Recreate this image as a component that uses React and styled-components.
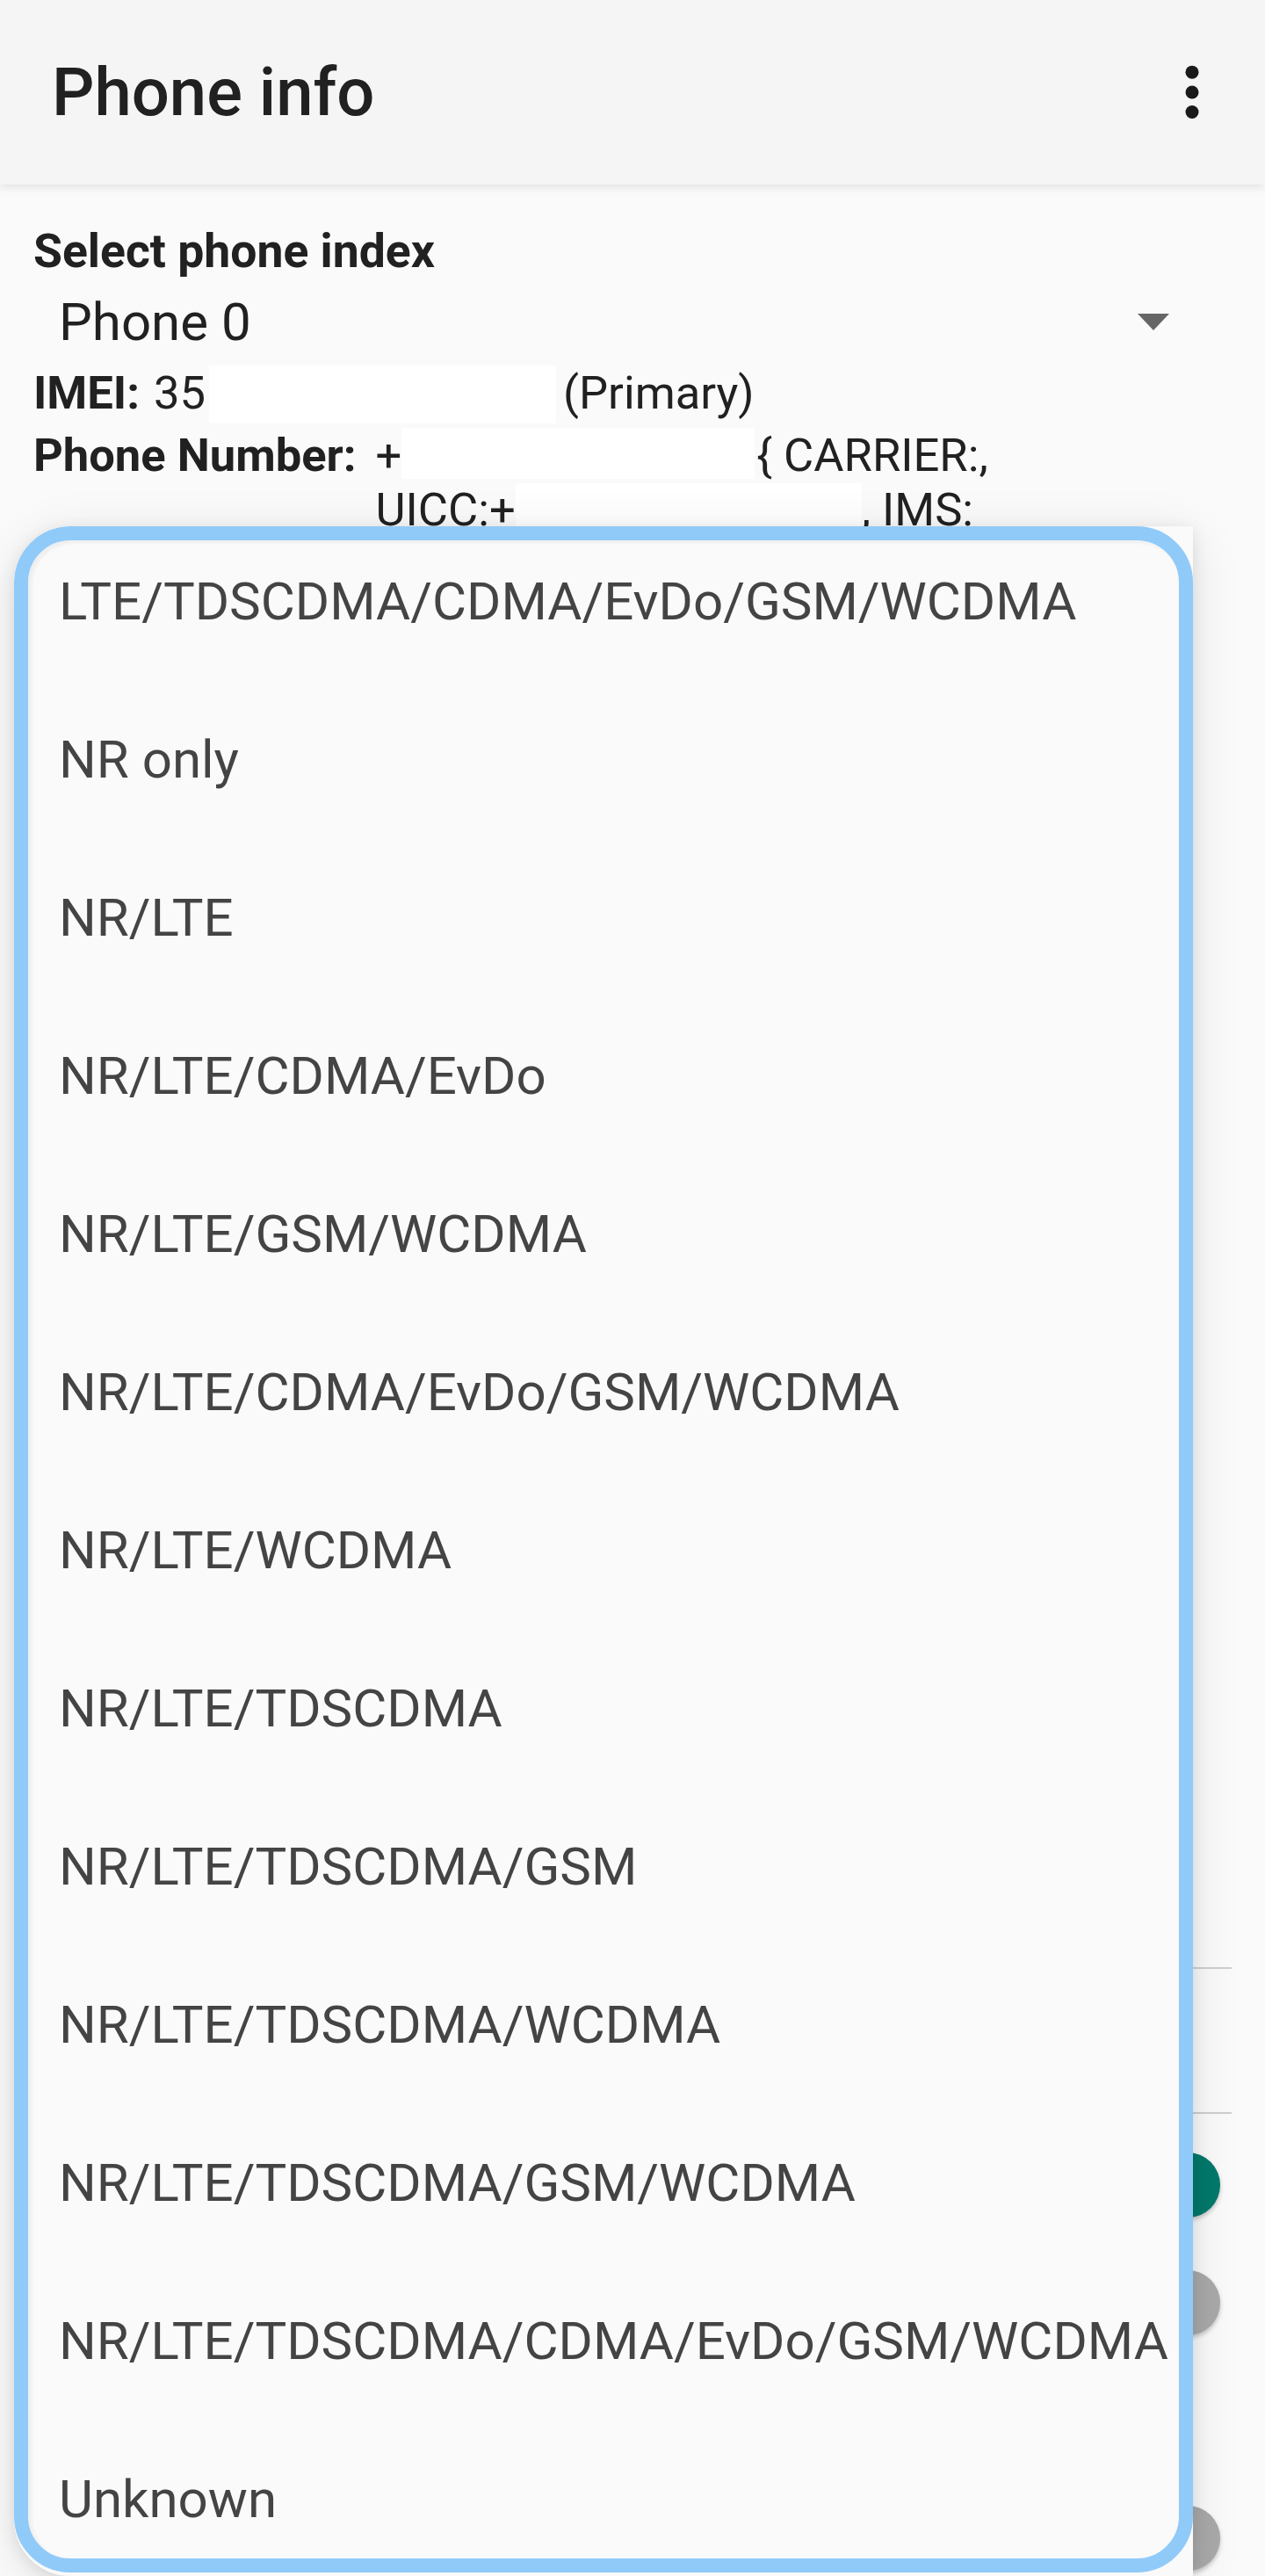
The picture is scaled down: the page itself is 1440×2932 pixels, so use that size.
import React from 'react'
import styled, { createGlobalStyle } from 'styled-components'

const GlobalStyle = createGlobalStyle`
  html, body {
    margin: 0;
    padding: 0;
    background: #fafafa;
  }
  body {
    font-family: Roboto, "Noto Sans", "Liberation Sans", sans-serif;
    color: #212121;
  }
`

const Screen = styled.div`
  position: relative;
  width: 1440px;
  height: 2932px;
  overflow: hidden;
  background: #fafafa;
  display: flex;
  flex-direction: column;
`

const AppBar = styled.header`
  height: 210px;
  flex-shrink: 0;
  display: flex;
  align-items: center;
  justify-content: space-between;
  padding: 0 38px 0 59px;
  background: #f5f5f5;
  box-shadow: 0 3px 10px rgba(0, 0, 0, 0.1);
  position: relative;
  z-index: 1;
`

const Title = styled.h1`
  margin: 0;
  font-size: 76px;
  font-weight: 500;
  color: #212121;
`

const MenuButton = styled.div`
  width: 90px;
  height: 90px;
  display: flex;
  align-items: center;
  justify-content: center;
`

const Content = styled.main`
  display: flex;
  flex-direction: column;
  padding: 45px 38px 0 38px;
`

const Label = styled.div`
  font-size: 53.5px;
  line-height: 61.5px;
  font-weight: 700;
`

const Spinner = styled.div`
  display: flex;
  align-items: center;
  justify-content: space-between;
  padding: 14px 71px 15px 29px;
  font-size: 60px;
`

const Caret = styled.span`
  width: 0;
  height: 0;
  border-left: 18.5px solid transparent;
  border-right: 18.5px solid transparent;
  border-top: 19px solid #666;
`

const InfoRow = styled.div`
  display: flex;
  align-items: baseline;
  font-size: 52.5px;
  line-height: 61.5px;
  margin-bottom: ${p => p.space || 0}px;
`

const InfoLabel = styled.span`
  font-weight: 700;
  margin-right: ${p => p.gap}px;
  white-space: nowrap;
`

const InfoValue = styled.span`
  white-space: nowrap;
`

// white masking box; negative margins keep it from growing the line box
const Redacted = styled.span`
  display: inline-block;
  width: ${p => p.w}px;
  height: ${p => p.h}px;
  background: #fff;
  vertical-align: baseline;
  margin: -10px ${p => p.after || 0}px -${p => p.drop}px ${p => p.before || 0}px;
`

const Spacer = styled.div`
  height: ${p => p.h}px;
  flex-shrink: 0;
`

const Divider = styled.hr`
  margin: 0;
  border: 0;
  height: 2px;
  background: #cfcfcf;
`

const SwitchList = styled.div`
  padding-top: 14px;
  display: flex;
  flex-direction: column;
`

const SwitchRow = styled.div`
  height: 134px;
  display: flex;
  align-items: center;
  justify-content: flex-end;
  padding-right: ${p => p.inset}px;
`

const Thumb = styled.span`
  width: 74px;
  height: 74px;
  border-radius: 50%;
  background: ${p => (p.on ? '#00796b' : p.faint ? '#e6e6e6' : '#a9a9a9')};
  box-shadow: 0 3px 5px rgba(0, 0, 0, ${p => (p.faint ? 0.05 : 0.22)});
`

const Popup = styled.div`
  position: absolute;
  left: 16px;
  top: 599px;
  width: 1342px;
  bottom: 0;
  background: #fafafa;
  border-radius: 64px 0 0 64px;
  overflow: hidden;
  box-shadow: 0 10px 60px rgba(0, 0, 0, 0.09), 0 4px 18px rgba(0, 0, 0, 0.1);
  z-index: 5;

  &::after {
    content: '';
    position: absolute;
    left: 0;
    top: 0;
    right: 0;
    bottom: 4px;
    border: 16px solid #90caf9;
    border-radius: 64px;
    box-shadow: inset 4px 3px 4px rgba(0, 0, 0, 0.05);
    pointer-events: none;
  }
`

const OptionList = styled.ul`
  list-style: none;
  margin: -5px 0 0 0;
  padding: 0;
`

const Option = styled.li`
  height: 180px;
  display: flex;
  align-items: center;
  padding-left: 51px;
  font-size: 60px;
  color: #444;
  white-space: nowrap;
`

const networkTypes = [
  'LTE/TDSCDMA/CDMA/EvDo/GSM/WCDMA',
  'NR only',
  'NR/LTE',
  'NR/LTE/CDMA/EvDo',
  'NR/LTE/GSM/WCDMA',
  'NR/LTE/CDMA/EvDo/GSM/WCDMA',
  'NR/LTE/WCDMA',
  'NR/LTE/TDSCDMA',
  'NR/LTE/TDSCDMA/GSM',
  'NR/LTE/TDSCDMA/WCDMA',
  'NR/LTE/TDSCDMA/GSM/WCDMA',
  'NR/LTE/TDSCDMA/CDMA/EvDo/GSM/WCDMA',
  'Unknown',
]

const MoreIcon = () => (
  <svg width="90" height="90" viewBox="0 0 24 24" fill="#1a1a1a">
    <circle cx="12" cy="5.9" r="2" />
    <circle cx="12" cy="12" r="2" />
    <circle cx="12" cy="18" r="2" />
  </svg>
)

export default function App() {
  return (
    <Screen>
      <GlobalStyle />
      <AppBar>
        <Title>Phone info</Title>
        <MenuButton>
          <MoreIcon />
        </MenuButton>
      </AppBar>

      <Content>
        <Label>Select phone index</Label>
        <Spinner>
          <span>Phone 0</span>
          <Caret />
        </Spinner>

        <InfoRow space={10}>
          <InfoLabel gap={16}>IMEI:</InfoLabel>
          <InfoValue>
            35<Redacted w={395} h={66} drop={17} before={4} after={8} />(Primary)
          </InfoValue>
        </InfoRow>
        <InfoRow>
          <InfoLabel gap={22}>Phone Number:</InfoLabel>
          <InfoValue>
            +<Redacted w={402} h={58} drop={9} after={2} />{'{ CARRIER:,'}
            <br />
            UICC:+<Redacted w={394} h={58} drop={10} />, IMS:
          </InfoValue>
        </InfoRow>

        <Spacer h={1628} />
        <Divider />
        <Spacer h={163} />
        <Divider />
        <SwitchList>
          <SwitchRow inset={13}>
            <Thumb on />
          </SwitchRow>
          <SwitchRow inset={13}>
            <Thumb />
          </SwitchRow>
          <SwitchRow inset={46}>
            <Thumb faint />
          </SwitchRow>
          <SwitchRow inset={13}>
            <Thumb />
          </SwitchRow>
        </SwitchList>
      </Content>

      <Popup>
        <OptionList>
          {networkTypes.map(t => (
            <Option key={t}>{t}</Option>
          ))}
        </OptionList>
      </Popup>
    </Screen>
  )
}
